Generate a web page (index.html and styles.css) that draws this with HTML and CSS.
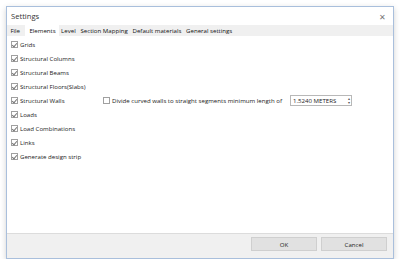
FILE: index.html
```html
<!DOCTYPE html>
<html lang="en">
  <head>
    <meta charset="UTF-8" />
    <title>Settings</title>
    <link rel="stylesheet" href="styles.css">
  </head>
  <body>
    <div class="dialog">
      <div class="titlebar">
        <span class="title">Settings</span>
        <span class="close">&#x2715;</span>
      </div>
      <div class="tabs">
        <span class="tab">File</span>
        <span class="tab active">Elements</span>
        <span class="tab">Level</span>
        <span class="tab">Section Mapping</span>
        <span class="tab">Default materials</span>
        <span class="tab">General settings</span>
      </div>
      <div class="content">
        <label class="check"><span class="box on"></span>Grids</label>
        <label class="check"><span class="box on"></span>Structural Columns</label>
        <label class="check"><span class="box on"></span>Structural Beams</label>
        <label class="check"><span class="box on"></span>Structural Floors(Slabs)</label>
        <div class="walls-row">
          <label class="check walls"><span class="box on"></span>Structural Walls</label>
          <label class="check"><span class="box"></span>Divide curved walls to straight segments minimum length of</label>
          <div class="spin">
            <span class="spin-value">1.5240 METERS</span>
            <span class="spin-arrows"><i>&#9652;</i><i>&#9662;</i></span>
          </div>
        </div>
        <label class="check"><span class="box on"></span>Loads</label>
        <label class="check"><span class="box on"></span>Load Combinations</label>
        <label class="check"><span class="box on"></span>Links</label>
        <label class="check"><span class="box on"></span>Generate design strip</label>
      </div>
      <div class="footer">
        <button class="btn">OK</button>
        <button class="btn">Cancel</button>
      </div>
    </div>
  </body>
</html>
```

FILE: styles.css
```css
body {
  margin: 0;
  background: #fff;
  font-family: "Open Sans", "Noto Sans", sans-serif;
  font-size: 6.1px;
  color: #222;
  padding: 6px 6px 0 6px;
}

.dialog {
  width: 386px;
  height: 251px;
  border: 1px solid #a9bfdc;
  background: #fff;
  box-shadow: 0 2px 6px rgba(0, 0, 0, 0.18);
  display: flex;
  flex-direction: column;
}

.titlebar {
  height: 18px;
  display: flex;
  align-items: center;
  justify-content: space-between;
  padding: 0 7px 0 4px;
}

.title {
  font-size: 7.6px;
  color: #333;
}

.close {
  font-size: 8px;
  color: #777;
}

.tabs {
  height: 11px;
  background: #f0f0f0;
  display: flex;
  align-items: flex-end;
  padding-left: 1px;
}

.tab {
  height: 10px;
  line-height: 10px;
  padding: 0 2.4px;
  color: #111;
}

.tab.active {
  background: #fff;
  height: 11px;
  line-height: 11px;
  padding: 0 3px 0 4px;
  margin-left: 3px;
}

.content {
  flex: 1;
  display: flex;
  flex-direction: column;
  gap: 5px;
  padding: 4px 4px 0 4px;
}

.check {
  display: flex;
  align-items: center;
  height: 9px;
  color: #222;
}

.box {
  width: 7px;
  height: 7px;
  border: 1px solid #a0a0a0;
  background: #fff;
  margin-right: 2px;
  position: relative;
  box-sizing: border-box;
}

.box.on::after {
  content: "";
  position: absolute;
  left: 1px;
  top: 0px;
  width: 2px;
  height: 4px;
  border: solid #777;
  border-width: 0 1px 1px 0;
  transform: rotate(40deg);
}

.walls-row {
  display: flex;
  align-items: center;
  height: 9px;
}

.walls {
  width: 92px;
}

.spin {
  margin-left: 8px;
  width: 62px;
  height: 11px;
  border: 1px solid #b8b8b8;
  box-sizing: border-box;
  display: flex;
  align-items: center;
  justify-content: space-between;
  padding-left: 2px;
}

.spin-arrows {
  display: flex;
  flex-direction: column;
  font-size: 4px;
  line-height: 4px;
  color: #555;
  padding-right: 1px;
}

.spin-arrows i {
  font-style: normal;
}

.footer {
  height: 21px;
  background: #f0f0f0;
  border-top: 1px solid #dcdcdc;
  display: flex;
  justify-content: flex-end;
  align-items: flex-start;
  gap: 4px;
  padding: 3px 6px 0 0;
}

.btn {
  width: 66px;
  height: 14px;
  border: 1px solid #cfcfcf;
  background: #e1e1e1;
  font-family: "Open Sans", "Noto Sans", sans-serif;
  font-size: 6.1px;
  color: #222;
  padding: 0;
}
```
